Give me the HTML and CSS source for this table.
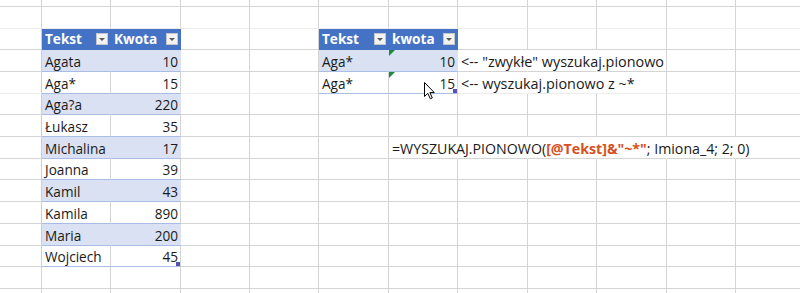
FILE: index.html
```html
<!DOCTYPE html>
<html lang="pl">
<head>
<meta charset="utf-8">
<title>Arkusz</title>
<link rel="stylesheet" href="styles.css">
</head>
<body>
<table class="sheet">
<colgroup>
<col class="ca"><col class="c69"><col class="c70"><col class="c69"><col class="c69"><col class="c70"><col class="c69"><col class="c70"><col class="c69"><col class="c70"><col class="c69"><col class="c70">
</colgroup>
<tr class="h7"><td></td><td></td><td></td><td></td><td></td><td></td><td></td><td></td><td></td><td></td><td></td><td></td></tr>
<tr class="h22 faint"><td></td><td></td><td></td><td></td><td></td><td></td><td></td><td></td><td></td><td></td><td></td><td></td></tr>
<tr class="h21"><td class="tl"></td>
<td class="hd"><div class="hc"><span>Tekst</span><span class="dd"></span></div></td>
<td class="hd"><div class="hc"><span>Kwota</span><span class="dd"></span></div></td>
<td></td><td></td>
<td class="hd"><div class="hc"><span>Tekst</span><span class="dd"></span></div></td>
<td class="hd"><div class="hc"><span>kwota</span><span class="dd"></span></div></td>
<td></td><td></td><td></td><td></td><td></td></tr>
<tr class="h22"><td class="tl"></td><td class="bd">Agata</td><td class="bd n">10</td><td></td><td></td>
<td class="bd">Aga*</td><td class="bd n cell-rel"><span class="err"></span>10</td>
<td class="nr note">&lt;-- "zwykłe" wyszukaj.pionowo</td><td class="nr"></td><td></td><td></td><td></td></tr>
<tr class="h22 faint"><td class="tl"></td><td class="wt">Aga*</td><td class="wt n">15</td><td></td><td></td>
<td class="wt">Aga*</td><td class="wt n cell-rel"><span class="err"></span>15<span class="handle"></span><svg class="cursor" width="12" height="18" viewBox="0 0 12 18"><path d="M0.5 0.5 L0.5 14.5 L3.8 11.3 L6.3 16.8 L8.3 15.9 L5.9 10.6 L10.3 10.6 Z" fill="#fff" stroke="#000" stroke-width="1" stroke-linejoin="round"/></svg></td>
<td class="nr note">&lt;-- wyszukaj.pionowo z ~*</td><td class="nr"></td><td></td><td></td><td></td></tr>
<tr class="h21"><td class="tl"></td><td class="bd">Aga?a</td><td class="bd n">220</td><td></td><td></td><td></td><td></td><td></td><td></td><td></td><td></td><td></td></tr>
<tr class="h22"><td class="tl"></td><td class="wt">Łukasz</td><td class="wt n">35</td><td></td><td></td><td></td><td></td><td></td><td></td><td></td><td></td><td></td></tr>
<tr class="h22"><td class="tl"></td><td class="bd">Michalina</td><td class="bd n">17</td><td></td><td></td><td></td>
<td class="nr fx">=WYSZUKAJ.PIONOWO(<span class="ref">[@Tekst]&amp;"~*"</span>; Imiona_4; 2; 0)</td>
<td class="nr"></td><td class="nr"></td><td class="nr"></td><td class="nr"></td><td></td></tr>
<tr class="h21"><td class="tl"></td><td class="wt">Joanna</td><td class="wt n">39</td><td></td><td></td><td></td><td></td><td></td><td></td><td></td><td></td><td></td></tr>
<tr class="h22"><td class="tl"></td><td class="bd">Kamil</td><td class="bd n">43</td><td></td><td></td><td></td><td></td><td></td><td></td><td></td><td></td><td></td></tr>
<tr class="h22"><td class="tl"></td><td class="wt">Kamila</td><td class="wt n">890</td><td></td><td></td><td></td><td></td><td></td><td></td><td></td><td></td><td></td></tr>
<tr class="h22"><td class="tl"></td><td class="bd">Maria</td><td class="bd n">200</td><td></td><td></td><td></td><td></td><td></td><td></td><td></td><td></td><td></td></tr>
<tr class="h21"><td class="tl"></td><td class="wt">Wojciech</td><td class="wt n cell-rel">45<span class="handle"></span></td><td></td><td></td><td></td><td></td><td></td><td></td><td></td><td></td><td></td></tr>
<tr class="h22"><td></td><td></td><td></td><td></td><td></td><td></td><td></td><td></td><td></td><td></td><td></td><td></td></tr>
<tr class="h4 last"><td></td><td></td><td></td><td></td><td></td><td></td><td></td><td></td><td></td><td></td><td></td><td></td></tr>
</table>
</body>
</html>
```
FILE: styles.css
```css
html, body {
  margin: 0;
  padding: 0;
  background: #ffffff;
  overflow: hidden;
}

.sheet {
  table-layout: fixed;
  border-collapse: separate;
  border-spacing: 0;
  width: 806px;
  font-family: "Open Sans", "Liberation Sans", sans-serif;
  font-size: 13.6px;
  color: #1a1a1a;
}

.ca { width: 42px; }
.c69 { width: 69px; }
.c70 { width: 70px; }

.h4 { height: 4px; }
.h7 { height: 7px; }
.h21 { height: 21px; }
.h22 { height: 22px; }

.sheet td {
  box-sizing: border-box;
  padding: 0 2px 0 3px;
  border-right: 1px solid #d4d4d4;
  border-bottom: 1px solid #d4d4d4;
  white-space: nowrap;
  vertical-align: bottom;
  line-height: 18px;
  overflow: visible;
}

.faint td { border-bottom-color: #ececec; }
.last td { border-bottom: none; }

.sheet td.tl { border-right-color: #c3cfe9; }

.sheet td.n { text-align: right; }

.sheet td.hd {
  background: #4472c4;
  border-right-color: #4472c4;
  border-bottom-color: #4472c4;
  color: #ffffff;
  font-weight: 700;
  padding: 0 2px 0 3px;
  vertical-align: middle;
}

.hc {
  display: flex;
  align-items: center;
  justify-content: space-between;
}

.dd {
  box-sizing: border-box;
  width: 12px;
  height: 12px;
  background: #f3f3f3;
  border: 1px solid #c6c6c6;
  display: flex;
  align-items: flex-end;
  justify-content: center;
  padding-bottom: 3px;
}

.dd::after {
  content: "";
  border-left: 3px solid transparent;
  border-right: 3px solid transparent;
  border-top: 3px solid #595959;
}

.sheet td.bd {
  background: #d9e1f2;
  border-right-color: #d9e1f2;
  border-bottom-color: #a9bde4;
}

.sheet td.wt {
  border-bottom-color: #a9bde4;
}

.sheet td.nr {
  border-right-color: transparent;
}

.sheet td.note {
  font-size: 14.4px;
}

.sheet td.fx {
  font-size: 14.2px;
}

.cell-rel { position: relative; }

.err {
  position: absolute;
  left: 0;
  top: 0;
  width: 0;
  height: 0;
  border-top: 6px solid #1b8a3c;
  border-right: 6px solid transparent;
}

.handle {
  position: absolute;
  right: 0;
  bottom: 0;
  width: 4px;
  height: 4px;
  background: #5b4fb5;
}

.cursor {
  position: absolute;
  left: 35px;
  top: 10px;
}

.ref {
  color: #d8501e;
  font-weight: 700;
}
```
